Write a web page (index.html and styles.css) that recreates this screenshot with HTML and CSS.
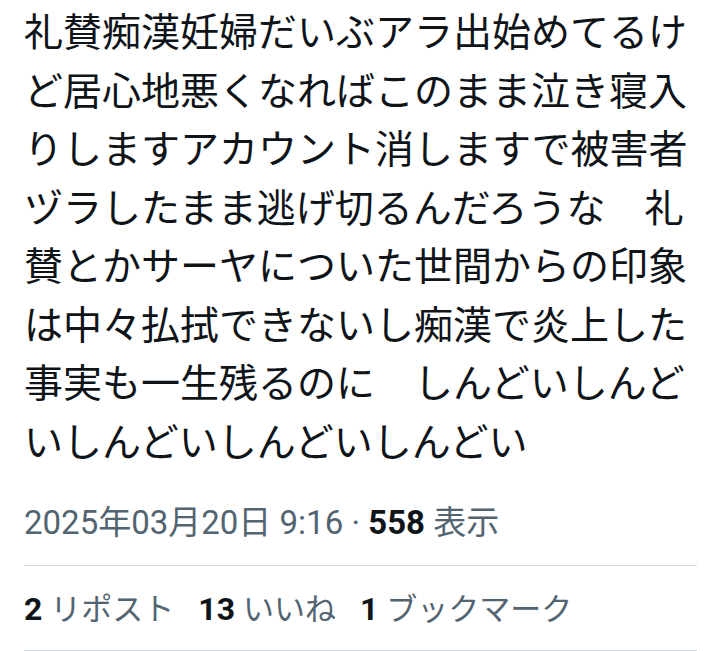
FILE: index.html
```html
<!DOCTYPE html>
<html lang="ja">
<head>
<meta charset="utf-8">
<link rel="stylesheet" href="styles.css">
</head>
<body>
<article class="tweet">
  <p class="tweet-text">礼賛痴漢妊婦だいぶアラ出始めてるけど居心地悪くなればこのまま泣き寝入りしますアカウント消しますで被害者ヅラしたまま逃げ切るんだろうな　礼賛とかサーヤについた世間からの印象は中々払拭できないし痴漢で炎上した事実も一生残るのに　しんどいしんどいしんどいしんどいしんどい</p>
  <div class="meta"><span>2025年03月20日 9:16</span> · <b class="num">558</b> 表示</div>
  <div class="stats">
    <span class="stat"><b class="num">2</b> <span class="label">リポスト</span></span>
    <span class="stat"><b class="num">13</b> <span class="label">いいね</span></span>
    <span class="stat"><b class="num">1</b> <span class="label">ブックマーク</span></span>
  </div>
</article>
</body>
</html>
```

FILE: styles.css
```css
html, body {
  margin: 0;
  padding: 0;
  background: #ffffff;
}
.tweet {
  padding: 0 23px 0 24px;
  font-family: "Noto Sans CJK JP", sans-serif;
  color: #0f1419;
}
.tweet-text {
  margin: 0;
  font-size: 39px;
  line-height: 58.5px;
  color: #0f1419;
}
.meta {
  margin-top: 35px;
  padding-bottom: 22px;
  font-family: Roboto, "Noto Sans CJK JP", sans-serif;
  font-size: 33px;
  line-height: 40px;
  color: #536471;
  border-bottom: 1px solid #d4d9dc;
}
.num {
  font-weight: 700;
  color: #0f1419;
}
.stats {
  display: flex;
  gap: 24px;
  padding: 23px 0 20px;
  font-family: Roboto, "Noto Sans CJK JP", sans-serif;
  font-size: 32px;
  line-height: 40px;
  color: #536471;
  border-bottom: 1px solid #d4d9dc;
}
.label {
  font-size: 31px;
}
```
